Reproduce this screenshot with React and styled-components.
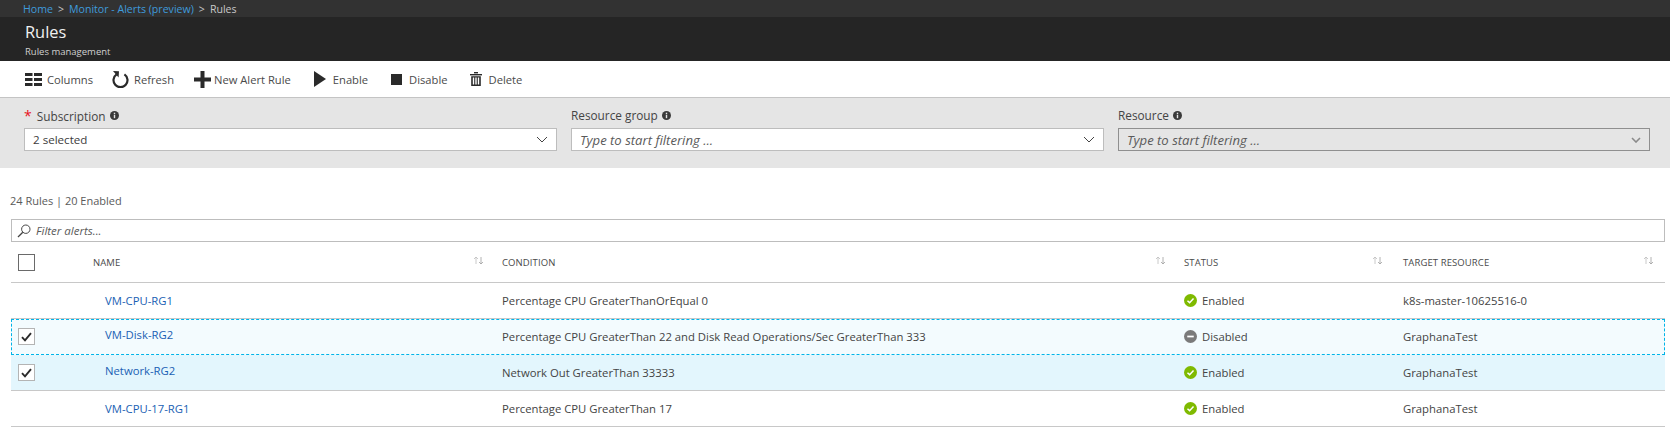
import styled, { createGlobalStyle } from "styled-components";

const GlobalStyle = createGlobalStyle`
  html, body {
    margin: 0;
    padding: 0;
    background: #fff;
    font-family: "Open Sans", "Liberation Sans", sans-serif;
    color: #3c3c3c;
  }
`;

const COLUMNS = "82px 409px 682px 219px 1fr";

const Page = styled.div`
  width: 1670px;
  height: 427px;
  overflow: hidden;
`;

const Breadcrumb = styled.div`
  display: flex;
  align-items: center;
  gap: 5px;
  height: 17px;
  padding-left: 23px;
  background: #323232;
  font-size: 10.6px;
  color: #c8c8c8;
`;

const Crumb = styled.span`
  color: #3f9bdc;
`;

const Blade = styled.div`
  height: 44px;
  padding-left: 25px;
  background: #252525;
  color: #f0f0f0;
`;

const BladeTitle = styled.div`
  font-size: 16.4px;
  line-height: 27px;
  padding-top: 1px;
`;

const BladeSub = styled.div`
  font-size: 9.5px;
  line-height: 13px;
  color: #d0d0d0;
`;

const Toolbar = styled.div`
  display: flex;
  align-items: center;
  height: 36px;
  padding-left: 25px;
  border-bottom: 1px solid #c4c4c4;
`;

const ToolButton = styled.div`
  display: flex;
  align-items: center;
  gap: ${(p) => p.$gap}px;
  margin-right: ${(p) => p.$space}px;
  font-size: 11.2px;
  color: #4a4a4a;
`;

const FilterPanel = styled.div`
  display: grid;
  grid-template-columns: 533px 533px 532px;
  column-gap: 14px;
  height: 70px;
  padding: 9px 0 0 24px;
  box-sizing: border-box;
  background: #e5e5e5;
`;

const Field = styled.div`
  display: flex;
  flex-direction: column;
  gap: 5px;
`;

const FieldLabel = styled.div`
  display: flex;
  align-items: center;
  gap: 4px;
  height: 16px;
  font-size: 11.8px;
  color: #444;
`;

const Required = styled.span`
  color: #e81123;
  font-size: 14px;
  margin-right: 2px;
`;

const Select = styled.div`
  display: flex;
  align-items: center;
  justify-content: space-between;
  height: 23px;
  padding: 0 8px;
  box-sizing: border-box;
  background: ${(p) => (p.$disabled ? "#e5e5e5" : "#fff")};
  border: 1px solid ${(p) => (p.$disabled ? "#8f8f8f" : "#bdbdbd")};
  font-size: ${(p) => (p.$hint ? 13.1 : 11.6)}px;
  font-style: ${(p) => (p.$hint ? "italic" : "normal")};
  color: ${(p) => (p.$hint ? "#5a5a5a" : "#3c3c3c")};
`;

const Summary = styled.div`
  height: 15px;
  margin: 25px 0 0 10px;
  font-size: 11px;
  line-height: 15px;
  color: #5a5a5a;
`;

const Content = styled.div`
  margin: 0 5px 0 11px;
`;

const SearchBox = styled.div`
  display: flex;
  align-items: center;
  gap: 5px;
  height: 23px;
  margin-top: 11px;
  padding-left: 5px;
  box-sizing: border-box;
  border: 1px solid #bdbdbd;
  font-size: 11.5px;
  font-style: italic;
  color: #5a5a5a;
`;

const HeaderRow = styled.div`
  display: grid;
  grid-template-columns: ${COLUMNS};
  align-items: center;
  height: 40px;
  border-bottom: 1px solid #c8c8c8;
`;

const HeaderCell = styled.div`
  display: flex;
  align-items: center;
  justify-content: space-between;
  padding-right: ${(p) => p.$pad}px;
  font-size: 9.5px;
  color: #4a4a4a;
  letter-spacing: 0.1px;
`;

const Row = styled.div`
  display: grid;
  grid-template-columns: ${COLUMNS};
  align-items: center;
  height: 36px;
  box-sizing: border-box;
  background: ${(p) => p.$bg || "#fff"};
  border-bottom: 1px solid ${(p) => (p.$focus ? "transparent" : "#c8c8c8")};
  outline: ${(p) => (p.$focus ? "1px dashed #00b4e8" : "none")};
  outline-offset: -1px;
  font-size: 11.3px;
  color: #444;
`;

const CheckCell = styled.div`
  padding-left: 7px;
`;

const Checkbox = styled.div`
  display: flex;
  align-items: center;
  justify-content: center;
  width: ${(p) => p.$size}px;
  height: ${(p) => p.$size}px;
  box-sizing: border-box;
  border: 1px solid ${(p) => (p.$dark ? "#6a6a6a" : "#b4b4b4")};
  background: #fff;
`;

const NameLink = styled.a`
  padding-left: 12px;
  margin-top: ${(p) => p.$lift}px;
  color: #1a5fb4;
`;

const StatusCell = styled.div`
  display: flex;
  align-items: center;
  gap: 5px;
`;

const SortGlyph = styled.svg`
  margin-bottom: 3px;
`;

const GridIcon = () => (
  <svg width="17" height="13" viewBox="0 0 17 13" fill="#2a2a2a">
    <rect x="0" y="0" width="7.5" height="3" />
    <rect x="9" y="0" width="8" height="3" />
    <rect x="0" y="5" width="7.5" height="3" />
    <rect x="9" y="5" width="8" height="3" />
    <rect x="0" y="10" width="7.5" height="3" />
    <rect x="9" y="10" width="8" height="3" />
  </svg>
);

const RefreshIcon = () => (
  <svg width="17" height="18" viewBox="0 0 17 18" fill="none">
    <path d="M4.6 4.4A7 7 0 1 0 12.4 4.4" stroke="#2a2a2a" strokeWidth="2.2" />
    <path d="M1 1 L7 1.2 L6.6 7.4 Z" fill="#2a2a2a" />
  </svg>
);

const PlusIcon = () => (
  <svg width="17" height="17" viewBox="0 0 17 17" fill="#2a2a2a">
    <rect x="6.5" y="0" width="4" height="17" />
    <rect x="0" y="6.5" width="17" height="4" />
  </svg>
);

const PlayIcon = () => (
  <svg width="12" height="16" viewBox="0 0 12 16" fill="#2a2a2a">
    <path d="M0 0 L12 8 L0 16 Z" />
  </svg>
);

const StopIcon = () => (
  <svg width="11" height="11" viewBox="0 0 11 11" fill="#2a2a2a">
    <rect width="11" height="11" />
  </svg>
);

const TrashIcon = () => (
  <svg width="12" height="14" viewBox="0 0 12 14" fill="#2a2a2a">
    <rect x="0" y="2" width="12" height="1.4" />
    <rect x="4" y="0" width="4" height="1.4" />
    <path d="M1.2 4.2H10.8V14H1.2ZM2.8 5.6V12.6H4.2V5.6ZM5.3 5.6V12.6H6.7V5.6ZM7.8 5.6V12.6H9.2V5.6Z" fillRule="evenodd" />
  </svg>
);

const InfoIcon = () => (
  <svg width="9" height="9" viewBox="0 0 9 9">
    <circle cx="4.5" cy="4.5" r="4.5" fill="#3a3a3a" />
    <rect x="3.8" y="3.7" width="1.4" height="3.5" fill="#e5e5e5" />
    <rect x="3.8" y="1.7" width="1.4" height="1.3" fill="#e5e5e5" />
  </svg>
);

const Chevron = ({ color = "#444", width = 1 }) => (
  <svg width="12" height="7" viewBox="0 0 12 7" fill="none">
    <path d="M1 1 L6 6 L11 1" stroke={color} strokeWidth={width} />
  </svg>
);

const DisabledChevron = () => (
  <svg width="10" height="6" viewBox="0 0 10 6" fill="none">
    <path d="M1 1 L5 5 L9 1" stroke="#8a8a8a" strokeWidth="1.6" />
  </svg>
);

const SearchIcon = () => (
  <svg width="14" height="14" viewBox="0 0 14 14" fill="none" stroke="#444">
    <circle cx="8.8" cy="5.2" r="4.2" />
    <path d="M5.8 8.2 L1 13" strokeWidth="1.3" />
  </svg>
);

const SortIcon = () => (
  <SortGlyph width="11" height="9" viewBox="0 0 11 9" fill="none" stroke="#bcbcbc" strokeWidth="0.8">
    <path d="M3 8V1M1 3L3 1L5 3" />
    <path d="M8 1V8M6 6L8 8L10 6" stroke="#a0a0a0" />
  </SortGlyph>
);

const CheckMark = () => (
  <svg width="11" height="10" viewBox="0 0 11 10" fill="none">
    <path d="M1 5.2 L4 8.3 L10 1.2" stroke="#2a2a2a" strokeWidth="1.9" />
  </svg>
);

const StatusIcon = ({ enabled }) => (
  <svg width="13" height="13" viewBox="0 0 12 12" fill="none">
    <circle cx="6" cy="6" r="6" fill={enabled ? "#7fba00" : "#7a7a7a"} />
    {enabled ? (
      <path d="M3.2 6.2 L5.2 8 L8.8 4.2" stroke="#fff" strokeWidth="1.4" />
    ) : (
      <rect x="3" y="5.2" width="6" height="1.6" fill="#fff" />
    )}
  </svg>
);

const tools = [
  { label: "Columns", icon: <GridIcon />, space: 19, gap: 5 },
  { label: "Refresh", icon: <RefreshIcon />, space: 20, gap: 5 },
  { label: "New Alert Rule", icon: <PlusIcon />, space: 23, gap: 3 },
  { label: "Enable", icon: <PlayIcon />, space: 23, gap: 7 },
  { label: "Disable", icon: <StopIcon />, space: 22, gap: 7 },
  { label: "Delete", icon: <TrashIcon />, space: 0, gap: 7 },
];

const rules = [
  { name: "VM-CPU-RG1", condition: "Percentage CPU GreaterThanOrEqual 0", enabled: true, target: "k8s-master-10625516-0" },
  { name: "VM-Disk-RG2", condition: "Percentage CPU GreaterThan 22 and Disk Read Operations/Sec GreaterThan 333", enabled: false, target: "GraphanaTest", checked: true, focus: true, bg: "#f3fbfe", lift: -5 },
  { name: "Network-RG2", condition: "Network Out GreaterThan 33333", enabled: true, target: "GraphanaTest", checked: true, bg: "#e3f6fd", lift: -4 },
  { name: "VM-CPU-17-RG1", condition: "Percentage CPU GreaterThan 17", enabled: true, target: "GraphanaTest" },
];

export default function App() {
  return (
    <Page>
      <GlobalStyle />
      <Breadcrumb>
        <Crumb>Home</Crumb>
        <span>&gt;</span>
        <Crumb>Monitor - Alerts (preview)</Crumb>
        <span>&gt;</span>
        <span>Rules</span>
      </Breadcrumb>
      <Blade>
        <BladeTitle>Rules</BladeTitle>
        <BladeSub>Rules management</BladeSub>
      </Blade>
      <Toolbar>
        {tools.map((t) => (
          <ToolButton key={t.label} $space={t.space} $gap={t.gap}>
            {t.icon}
            {t.label}
          </ToolButton>
        ))}
      </Toolbar>
      <FilterPanel>
        <Field>
          <FieldLabel>
            <span>
              <Required>*</Required> Subscription
            </span>
            <InfoIcon />
          </FieldLabel>
          <Select>
            2 selected
            <Chevron />
          </Select>
        </Field>
        <Field>
          <FieldLabel>
            Resource group
            <InfoIcon />
          </FieldLabel>
          <Select $hint>
            Type to start filtering ...
            <Chevron />
          </Select>
        </Field>
        <Field>
          <FieldLabel>
            Resource
            <InfoIcon />
          </FieldLabel>
          <Select $hint $disabled>
            Type to start filtering ...
            <DisabledChevron />
          </Select>
        </Field>
      </FilterPanel>
      <Summary>24 Rules | 20 Enabled</Summary>
      <Content>
        <SearchBox>
          <SearchIcon />
          Filter alerts...
        </SearchBox>
        <HeaderRow>
          <CheckCell>
            <Checkbox $size={17} $dark />
          </CheckCell>
          <HeaderCell $pad={18}>
            NAME
            <SortIcon />
          </HeaderCell>
          <HeaderCell $pad={18}>
            CONDITION
            <SortIcon />
          </HeaderCell>
          <HeaderCell $pad={20}>
            STATUS
            <SortIcon />
          </HeaderCell>
          <HeaderCell $pad={11}>
            TARGET RESOURCE
            <SortIcon />
          </HeaderCell>
        </HeaderRow>
        {rules.map((r) => (
          <Row key={r.name} $bg={r.bg} $focus={r.focus}>
            <CheckCell>
              {r.checked && (
                <Checkbox $size={17}>
                  <CheckMark />
                </Checkbox>
              )}
            </CheckCell>
            <NameLink $lift={r.lift || 0}>{r.name}</NameLink>
            <div>{r.condition}</div>
            <StatusCell>
              <StatusIcon enabled={r.enabled} />
              {r.enabled ? "Enabled" : "Disabled"}
            </StatusCell>
            <div>{r.target}</div>
          </Row>
        ))}
      </Content>
    </Page>
  );
}
